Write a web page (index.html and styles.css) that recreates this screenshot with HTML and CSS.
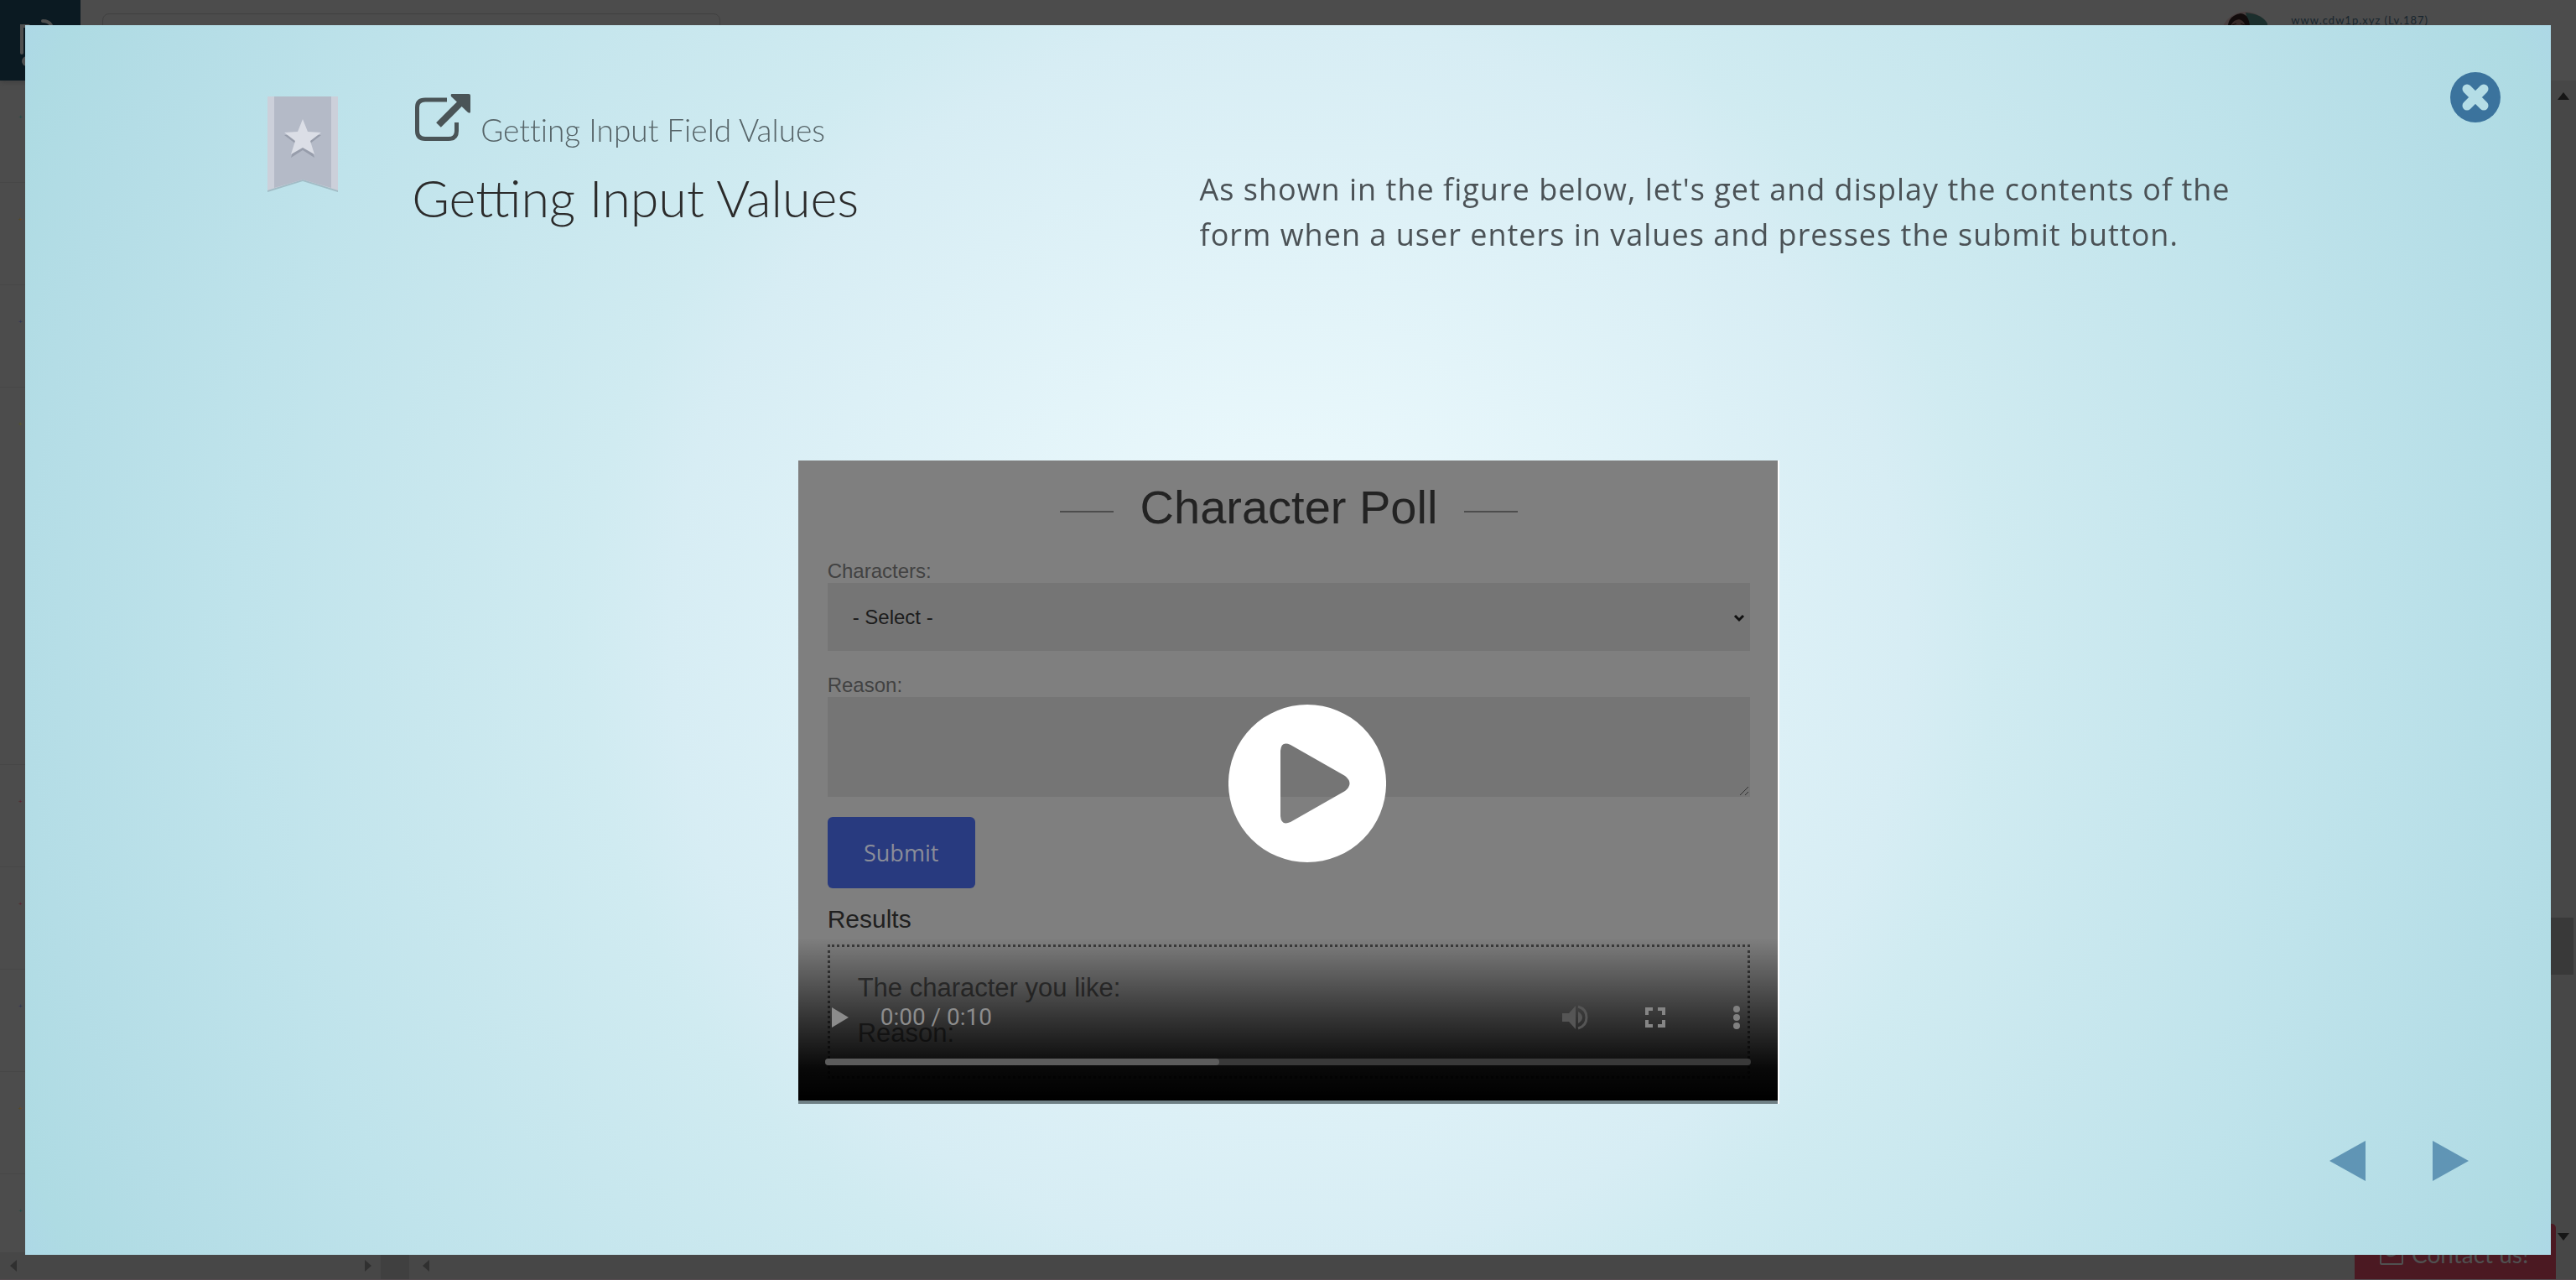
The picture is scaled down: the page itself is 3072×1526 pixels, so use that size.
FILE: index.html
```
<!DOCTYPE html>
<html lang="en">
<head>
<meta charset="utf-8">
<meta name="viewport" content="width=device-width, initial-scale=1">
<title>Getting Input Values</title>
<link rel="stylesheet" href="styles.css">
</head>
<body>
<div class="app">
  <header class="topbar">
    <a class="logo" href="#" aria-label="Home">
      <svg viewBox="0 0 96 96" fill="none" stroke="#4f4f4f" stroke-width="4" stroke-linecap="round"><path d="M26 63V31H34M51 25Q58 25 61 30"/><circle cx="32" cy="73" r="6" fill="#4f4f4f" stroke="none"/></svg>
    </a>
    <input class="search" type="text" aria-label="Search">
    <div class="user">
      <svg class="avatar" viewBox="0 0 60 60"><circle cx="30" cy="30" r="30" fill="#4a4040"/><path d="M30 1Q50 3 56 14V20H34Z" fill="#1c2f2d"/><path d="M9 26Q6 5 24 2Q36 3 35 24Z" fill="#120c0c"/><path d="M12 26Q10 11 22 9Q31 11 31 26Z" fill="#382b29"/><path d="M34 24Q36 15 45 16Q52 17 54 26Z" fill="#080808"/><path d="M14 16l5-2M24 14l5 2" stroke="#120c0c" stroke-width="1"/></svg>
      <span>www.cdw1p.xyz (Lv.187)</span>
    </div>
  </header>
  <div class="workspace">
    <ul class="sidebar">
      <li class="teal"></li><li class="amber"></li><li class="indigo"></li><li class="yellow tall"></li><li class="red"></li><li class="red"></li><li class="indigo"></li><li class="amber"></li><li class="teal"></li>
    </ul>
    <div class="scrollbar">
      <svg viewBox="0 0 14 9"><path d="M7 0L14 9H0Z"/></svg>
      <div class="thumb"></div>
      <svg viewBox="0 0 14 9"><path d="M0 0H14L7 9Z"/></svg>
    </div>
  </div>
  <footer class="bottombar">
    <div class="hscroll">
      <svg viewBox="0 0 8 14"><path d="M8 0V14L0 7Z"/></svg>
      <svg viewBox="0 0 8 14"><path d="M0 0V14L8 7Z"/></svg>
    </div>
    <div class="corner"></div>
    <svg class="next-pane" viewBox="0 0 8 14"><path d="M8 0V14L0 7Z"/></svg>
  </footer>
  <a class="contact" href="#">
    <svg viewBox="0 0 28 28" fill="none" stroke="#505050" stroke-width="2"><rect x="1" y="2" width="26" height="24" rx="1"/><path d="M7 13Q13 20 21 12"/></svg>
    Contact us!
  </a>
</div>

<main class="modal">
  <button class="close" aria-label="Close">
    <svg viewBox="0 0 60 60"><circle cx="30" cy="30" r="30" fill="#3b739d"/><path d="M20 20L40 40M40 20L20 40" stroke="#b4dde6" stroke-width="11" stroke-linecap="round"/></svg>
  </button>
  <header class="lesson">
    <svg class="bookmark" viewBox="0 0 84 114">
      <path d="M0 0H84V114L42 101L0 114Z" fill="#8fa3ad" opacity=".6"/>
      <path d="M0 0H84V112L42 99L0 112Z" fill="#ccd0da"/>
      <path d="M8 0H76V109L42 99L8 109Z" fill="#b4bac7"/>
      <path d="M42 30l6 15 16 1-13 10 5 17-14-9-14 9 5-17-13-10 16-1z" fill="#979dab"/>
      <path d="M42 27l6 15 16 1-13 10 5 16-14-8-14 8 5-16-13-10 16-1z" fill="#dbdee6"/>
    </svg>
    <div class="heading">
      <a class="topic" href="#">
        <svg viewBox="0 0 66 56"><path d="M38 7H12Q2.500 7 2.500 16V44Q2.500 53.500 12 53.500H40Q49.500 53.500 49.500 44V34" fill="none" stroke="#4a5457" stroke-width="5"/><path d="M28 37L54 11" stroke="#4a5457" stroke-width="8"/><path d="M44 0H64Q66 0 66 2V21Q66 24 63 22L43 3Q42 0 44 0Z" fill="#4a5457"/></svg>
        <span>Getting Input Field Values</span>
      </a>
      <h1>Getting Input Values</h1>
    </div>
    <p class="intro">As shown in the figure below, let's get and display the contents of the form when a user enters in values and presses the submit button.</p>
  </header>

  <section class="player" aria-label="Video">
    <div class="poll">
      <h2>Character Poll</h2>
      <label for="who">Characters:</label>
      <div class="picker">
        <select id="who"><option>- Select -</option></select>
        <svg viewBox="0 0 14 10"><path d="M2 2L7 7L12 2" fill="none" stroke="#111" stroke-width="3"/></svg>
      </div>
      <label for="why">Reason:</label>
      <div class="picker"><textarea id="why"></textarea><svg class="grip" viewBox="0 0 12 12"><path d="M1 11L11 1M7 11L11 7" stroke="#333" stroke-width="1"/></svg></div>
      <button class="submit">Submit</button>
      <h3>Results</h3>
      <div class="results"><p>The character you like:</p><p>Reason:</p></div>
    </div>
    <div class="controls">
      <div class="buttons">
        <button aria-label="Play"><svg width="20" height="24" viewBox="0 0 20 24"><path d="M0 0L20 12L0 24Z" fill="#8c8c8c"/></svg></button>
        <span class="time">0:00 / 0:10</span>
        <button aria-label="Mute"><svg width="32" height="30" viewBox="0 0 32 30"><path d="M0 10H8L16 1V29L8 20H0Z" fill="#555"/><path d="M19 8Q24 11 24 15T19 22Z" fill="#555"/><path d="M19 2Q29 5 29 15T19 28" fill="none" stroke="#555" stroke-width="3"/></svg></button>
        <button aria-label="Full screen"><svg width="24" height="24" viewBox="0 0 24 24"><path d="M2 9V2H9M15 2H22V9M22 15V22H15M9 22H2V15" fill="none" stroke="#858585" stroke-width="4"/></svg></button>
        <button aria-label="More options"><svg width="8" height="28" viewBox="0 0 8 28" fill="#808080"><circle cx="4" cy="4" r="4"/><circle cx="4" cy="14" r="4"/><circle cx="4" cy="24" r="4"/></svg></button>
      </div>
      <div class="track"><div class="loaded" style="width:42.6%"></div></div>
    </div>
    <button class="bigplay" aria-label="Play video">
      <svg viewBox="0 0 188 188"><path fill="#fff" fill-rule="evenodd" d="M94 0A94 94 0 1 1 94 188A94 94 0 1 1 94 0ZM62 55V133Q63 145 74 140L139 103Q150 94 139 85L74 48Q63 43 62 55Z"/></svg>
    </button>
  </section>

  <nav class="pager">
    <button aria-label="Previous"><svg viewBox="0 0 43 48"><path d="M43 0V48L0 24Z"/></svg></button>
    <button aria-label="Next"><svg viewBox="0 0 43 48"><path d="M0 0V48L43 24Z"/></svg></button>
  </nav>
</main>
</body>
</html>
```
FILE: styles.css
```
* { box-sizing: border-box; }
body { margin: 0; background: #4c4c4c; font-family: "Liberation Sans", Arial, sans-serif; }
h1, h2, h3, p, ul { margin: 0; padding: 0; font-weight: 400; }
ul { list-style: none; }
button { padding: 0; border: 0; background: none; font: inherit; }
svg { display: block; }
a { text-decoration: none; }

/* Dimmed page behind the dialog */
.app { position: relative; display: flex; flex-direction: column; height: 100vh; overflow: hidden; }
.topbar { display: flex; align-items: flex-start; height: 96px; flex: none; box-shadow: 0 2px 6px #3f3f3f; }
.logo { width: 96px; height: 96px; background: #0b1a22; }
.search { width: 24%; height: 64px; margin: 16px 0 0 26px; border: 1px solid #404040; border-radius: 8px; background: none; }
.user { display: flex; gap: 24px; margin: 14px 176px 0 auto; font: 13px/20px Lato, sans-serif; letter-spacing: 1px; color: #18262e; }
.avatar { width: 60px; height: 60px; }
.workspace { display: flex; flex: 1; min-height: 0; justify-content: space-between; }
.sidebar { width: 454px; overflow: hidden; }
.sidebar li { height: 122px; padding: 40px 22px; border-bottom: 1px solid #474747; }
.sidebar .tall { height: 450px; }
.sidebar li::before { content: "+"; display: block; width: 5px; font: 8px/8px "Liberation Sans", sans-serif; }
.teal { color: #1a4c48; }
.amber { color: #6b4a10; }
.indigo { color: #2a3156; }
.yellow { color: #5c5a1c; }
.red { color: #5a1f2c; }
.scrollbar { display: flex; flex-direction: column; align-items: center; width: 34px; padding: 14px 3px; background: #474747; }
.scrollbar svg { width: 14px; height: 9px; margin-left: 3px; fill: #161616; }
.thumb { width: 100%; height: 68px; margin: auto 0 308px; background: #393939; }
.bottombar { display: flex; align-items: center; height: 33px; flex: none; background: #474747; border-bottom: 1px solid #554b50; }
.bottombar svg { width: 8px; height: 16px; fill: #303030; }
.hscroll { display: flex; justify-content: space-between; width: 454px; padding: 0 11px 0 12px; }
.corner { width: 34px; height: 100%; margin-right: 16px; background: #404040; }
.contact { position: absolute; right: 24px; bottom: 1px; display: flex; align-items: center; gap: 10px; width: 240px; height: 66px; padding: 6px 30px 0; border-radius: 5px 5px 0 0; background: #4b1922; color: #505050; font: 28px/32px Lato, sans-serif; white-space: nowrap; }
.contact svg { width: 28px; height: 28px; }

/* Dialog */
.modal {
  position: fixed; inset: 30px; display: flex; flex-direction: column; padding: 80px 0 88px;
  background: radial-gradient(circle farthest-corner, #f0fbff 0%, #e8f7fb 14%, #d7edf4 44%, #d0ebf1 50%, #c8e7ee 62%, #bfe3eb 75%, #b4dde6 90%, #aedbe3 97%, #add8e6 100%);
}
.close { position: absolute; top: 56px; right: 60px; width: 60px; height: 60px; }
.lesson { display: grid; grid-template-columns: 172px 38.6% 1fr; min-height: 200px; padding: 0 9.600%; }
.bookmark { width: 84px; height: 114px; margin-top: 5px; }
.topic { display: flex; align-items: flex-start; gap: 12px; height: 66px; padding-left: 4px; color: #566468; font: 300 37px/44px Lato, sans-serif; }
.topic svg { width: 66px; height: 56px; margin-top: 2px; }
.topic span { margin-top: 23px; }
.topic, h1 { font-variant-ligatures: none; }
h1 { margin-top: 20px; color: #2b2b2b; font: 300 61px/80px Lato, sans-serif; }
.intro { max-width: 1260px; margin-top: 89px; color: #4b5256; font: 36px/54px "Open Sans", sans-serif; letter-spacing: 1px; }

/* Video */
.player { position: relative; width: 38.8%; margin: 239px auto 0; border-bottom: 4px solid #6f8085; box-shadow: 2px 0 0 #fff; }
.poll { padding: 24px 33px 26px 35px; background: #7f7f7f; }
h2 { display: flex; justify-content: center; align-items: center; gap: 32px; margin-bottom: 30px; color: #232323; font-size: 56px; line-height: 64px; }
h2::before, h2::after { content: ""; width: 64px; height: 2px; margin-top: 10px; background: #4d4d4d; }
.poll label { display: block; color: #424242; font-size: 24px; line-height: 28px; }
.picker { position: relative; margin-bottom: 27px; }
.picker + .submit { margin-top: -3px; }
.picker svg { position: absolute; right: 6px; top: 37px; width: 14px; height: 10px; }
.picker .grip { top: auto; right: 1px; bottom: 1px; width: 12px; height: 12px; }
select, textarea { display: block; width: 100%; border: 0; border-radius: 0; background: #757575; font: 24px/28px "Liberation Sans", sans-serif; color: #1c1c1c; }
select { height: 81px; padding: 0 30px; appearance: none; }
textarea { height: 119px; resize: none; }
.submit { display: block; width: 176px; height: 85px; border-radius: 6px; background: #283a7f; color: #8a8d99; font: 500 27px/36px "Open Sans", sans-serif; }
h3 { margin: 19px 0 12px; color: #202020; font-size: 30px; line-height: 36px; }
.results { padding: 22px 33px 24px; border: 3px dotted #3c3c3c; color: #3c3c3c; font-size: 31px; line-height: 54px; }
.controls { position: absolute; inset: auto 0 0; height: 194px; padding: 72px 32px 0; background: linear-gradient(#0000, #0009 50%, #000e 80%, #000); }
.buttons { display: flex; align-items: center; height: 46px; padding: 0 13px 0 8px; }
.time { margin: 0 auto 0 38px; color: #8c8c8c; font: 28px/32px Roboto, sans-serif; }
.buttons button + button { margin-left: 81px; }
.buttons button:nth-of-type(3) { margin-left: 67px; }
.track { height: 8px; margin-top: 26px; border-radius: 4px; background: #393939; }
.loaded { height: 8px; border-radius: 4px; background: #5c5c5c; }
.bigplay { position: absolute; left: 52%; top: 50.500%; width: 188px; height: 188px; transform: translate(-50%, -50%); }
.pager { display: flex; justify-content: flex-end; gap: 80px; margin-top: auto; padding-right: 98px; }
.pager svg { width: 43px; height: 48px; fill: #6095b5; }
```
